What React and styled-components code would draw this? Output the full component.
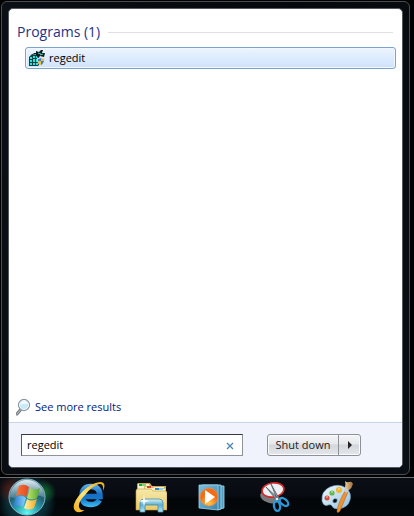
import React, { useState } from "react";
import styled, { createGlobalStyle } from "styled-components";

const GlobalStyle = createGlobalStyle`
  *, *::before, *::after { box-sizing: border-box; }
  body {
    margin: 0;
    background: #000;
    font-family: "Open Sans", "Noto Sans", sans-serif;
    font-size: 11px;
    line-height: 16px;
    color: #000;
  }
  button, input { font: inherit; color: inherit; }
  svg { display: block; flex: none; }
`;

const Desktop = styled.div`
  display: flex;
  flex-direction: column;
  min-height: 100vh;
`;

const MenuFrame = styled.section`
  flex: 1;
  display: flex;
  margin: 1px 4px 2px 1px;
  padding: 6px;
  border: 1px solid #4b4e51;
  border-radius: 6px;
  background: linear-gradient(100deg, #0b1016, #05080c 60%, #0a0f15);
`;

const MenuPanel = styled.div`
  flex: 1;
  display: flex;
  flex-direction: column;
  min-width: 0;
  border: 1px solid #55595d;
  border-radius: 5px;
  background: #fff;
  overflow: hidden;
`;

const Results = styled.div`
  flex: 1;
  padding: 13px 6px 0 8px;
`;

const GroupTitle = styled.h2`
  display: flex;
  align-items: center;
  gap: 8px;
  margin: 0 3px 5px 0;
  font-size: 14px;
  font-weight: 400;
  line-height: 20px;
  color: #1e3287;

  &::after {
    content: "";
    flex: 1;
    height: 1px;
    background: #dfe0e2;
  }
`;

const ResultList = styled.ul`
  margin: 0;
  padding: 0 0 0 8px;
  list-style: none;
`;

const ResultButton = styled.button`
  display: flex;
  align-items: center;
  gap: 4px;
  width: 100%;
  height: 22px;
  padding: 0 3px;
  border: 1px solid #7da2ce;
  border-radius: 3px;
  background: linear-gradient(#ecf4fe, #cfe3fd);
  box-shadow: inset 0 0 0 1px #f1f7ff;
  text-align: left;
`;

const MoreLink = styled.a`
  display: flex;
  align-items: center;
  align-self: flex-start;
  gap: 3px;
  padding: 0 7px 6px;
  color: #001b80;
  text-decoration: none;
`;

const MenuFooter = styled.footer`
  display: flex;
  align-items: center;
  gap: 24px;
  height: 45px;
  padding: 0 41px 0 12px;
  border-top: 1px solid #c5d5e8;
  background: #f0f3fb;
`;

const SearchForm = styled.form`
  flex: 1;
  display: flex;
  align-items: center;
  min-width: 0;
  height: 22px;
  border: 1px solid #8f9296;
  border-top-color: #37393c;
  border-left-color: #55585c;
  background: #fff;
`;

const SearchInput = styled.input`
  flex: 1;
  min-width: 0;
  padding: 0 0 0 5px;
  border: 0;
  outline: 0;
  background: transparent;
`;

const ClearButton = styled.button`
  display: grid;
  place-items: center;
  width: 24px;
  height: 20px;
  padding: 1px 0 0;
  border: 0;
  background: transparent;
`;

const PowerGroup = styled.div`
  display: flex;
  height: 22px;
  border: 1px solid #8e9298;
  border-radius: 3px;
  background: linear-gradient(#f4f5f7, #e6e8eb 45%, #d3d6da 50%, #e4e7eb);
  box-shadow: inset 0 0 0 1px #fafbfc;
`;

const PowerButton = styled.button`
  display: grid;
  place-items: center;
  width: ${(p) => p.$width}px;
  padding: 0;
  border: 0;
  border-left: ${(p) => (p.$divided ? "1px solid #8e9298" : "0")};
  background: transparent;
  color: #1c1c1c;
  white-space: nowrap;
`;

const Taskbar = styled.nav`
  display: flex;
  height: 39px;
  border-top: 1px solid #6b6e70;
  background: linear-gradient(#0a0f15, #080c12 45%, #030608 55%, #04080b);
`;

const StartButton = styled.button`
  display: grid;
  place-items: center;
  width: 58px;
  padding: 0 4px 0 0;
  border: 0;
  background:
    radial-gradient(circle at 44px 14px, #126a2c 0, transparent 12px),
    radial-gradient(circle at 12px 12px, #5a1c14 0, transparent 14px),
    radial-gradient(circle at 27px 24px, #14505c 0, #0a2b33 20px, transparent 29px);
`;

const TaskButton = styled.button`
  display: flex;
  justify-content: center;
  width: 62px;
  padding: 3px 0 0;
  border: 0;
  background: transparent;
`;

const RegeditIcon = () => (
  <svg width="16" height="16" viewBox="0 0 16 16" aria-hidden="true">
    <path d="M0 7 3 4 10 5 11 14 9 16H0Z" fill="#0b4546" />
    <path d="M1 7h2v2H1zM4 6h2v2H4zM7 6h2v2H7zM1 10h2v2H1zM4 9h2v3H4zM7 9h2v3H7zM1 13h2v2H1zM4 13h2v2H4zM7 13h2v2H7z" fill="#35dfdb" />
    <path d="m4 4 1-1h2v1zM7 1l3 1 2-2 2 0-1 3 3 0-1 4-4-1-2 2-2-3z" fill="#111b1c" />
    <path d="m9 3 3 1m-1 1 3-1" stroke="#43c9c5" fill="none" />
    <path d="M8 8q2 0 4-1 2 1 4 1 0 6-4 8-4-2-4-8" fill="#d9ddea" />
    <path d="M9 9q2 0 3-1v3H9zM12 11h3q-1 3-3 4z" fill="#3c7fd0" />
    <path d="M12 8q1 1 3 1v2h-3zM9 11h3v4q-3-1-3-4z" fill="#f1bd35" />
  </svg>
);

const MagnifierIcon = () => (
  <svg width="16" height="18" viewBox="0 0 16 18" aria-hidden="true">
    <path d="m6 10-5 6" stroke="#777c82" strokeWidth="3" strokeLinecap="round" />
    <path d="m6 10-5 6" stroke="#c1c5c9" strokeLinecap="round" />
    <circle cx="8" cy="7" r="5.5" fill="#c9e8fa" stroke="#8d969e" strokeWidth="1.3" />
    <circle cx="8" cy="7" r="4.5" fill="none" stroke="#eef8ff" />
    <path d="M4.5 7Q5 3 9 3q2 1 2.5 3Q7 5 4.5 7" fill="#f7fcff" />
  </svg>
);

const StartOrb = () => (
  <svg width="40" height="38" viewBox="0 0 40 38" aria-hidden="true">
    <defs>
      <radialGradient id="orb" cx=".5" cy=".95" r=".9">
        <stop offset="0" stopColor="#62fbf5" />
        <stop offset=".35" stopColor="#2ba3b0" />
        <stop offset=".65" stopColor="#245f74" />
        <stop offset="1" stopColor="#6f8f9f" />
      </radialGradient>
      <linearGradient id="orbGloss" x2="0" y2="1">
        <stop stopColor="#e8f6fb" stopOpacity=".9" />
        <stop offset="1" stopColor="#91b8c4" stopOpacity=".3" />
      </linearGradient>
      <linearGradient id="flagRed"><stop stopColor="#ff7436" /><stop offset="1" stopColor="#df4824" /></linearGradient>
      <linearGradient id="flagGreen"><stop stopColor="#c5e36a" /><stop offset="1" stopColor="#4ca632" /></linearGradient>
      <linearGradient id="flagBlue"><stop stopColor="#2476ce" /><stop offset="1" stopColor="#8bd4fb" /></linearGradient>
      <linearGradient id="flagYellow"><stop stopColor="#fff5a8" /><stop offset="1" stopColor="#f7a51f" /></linearGradient>
    </defs>
    <circle cx="20" cy="19" r="18" fill="url(#orb)" stroke="#83b8c7" />
    <path d="M3 19a17 17 0 0 1 34 0q-8-3-17 0-9 3-17 0" fill="url(#orbGloss)" />
    <path d="M12 8q5-3 10 1l-3 10q-4-4-10-1z" fill="url(#flagRed)" />
    <path d="M23 10q5 3 10 0l-3 10q-5 3-10 0z" fill="url(#flagGreen)" />
    <path d="M9 19q5-3 10 1l-3 9q-5-3-10 0z" fill="url(#flagBlue)" />
    <path d="M20 21q4 3 10 0l-3 9q-5 3-10 0z" fill="url(#flagYellow)" />
  </svg>
);

const ExplorerIcon = () => (
  <svg width="32" height="32" viewBox="0 0 32 32" aria-hidden="true">
    <defs>
      <linearGradient id="ieBlue" gradientUnits="userSpaceOnUse" x1="18" y1="2" x2="18" y2="27">
        <stop stopColor="#65b8ee" /><stop offset=".45" stopColor="#176fc3" /><stop offset=".65" stopColor="#1479ce" /><stop offset="1" stopColor="#45c5f8" />
      </linearGradient>
      <linearGradient id="ieGold" y1="1" x2="1" y2="0">
        <stop stopColor="#f3ac18" /><stop offset=".45" stopColor="#ffe576" /><stop offset="1" stopColor="#e9a91c" />
      </linearGradient>
    </defs>
    <path d="M11 15.5H27Q27 5.5 18 5.5T9 15Q9 23.5 18 23.5 24 23.5 26.5 19" fill="none" stroke="url(#ieBlue)" strokeWidth="5.5" />
    <path d="M30 10Q34 1 27 1 18 2 9 11-1 22 1 28q3 6 11 1-5 1-6-3-1-5 6-12Q19 5 26 3q5-1 4 7" fill="url(#ieGold)" />
  </svg>
);

const FoldersIcon = () => (
  <svg width="32" height="32" viewBox="0 0 32 32" aria-hidden="true">
    <defs>
      <linearGradient id="folder" x2="0" y2="1">
        <stop stopColor="#f7e9ab" /><stop offset="1" stopColor="#e9cb69" />
      </linearGradient>
      <linearGradient id="stand" x2="0" y2="1">
        <stop stopColor="#d8f5ff" stopOpacity=".95" /><stop offset=".45" stopColor="#5caed0" /><stop offset="1" stopColor="#b6eafa" />
      </linearGradient>
    </defs>
    <path d="M2 6V3l1-1h12l2 3h14v21H1z" fill="#cba74d" />
    <path d="M3 3h11l1 3h14v19H3z" fill="#fbf1ca" />
    <path d="M9 7V5h10l2 2h10v20H9z" fill="#ddc071" />
    <path d="M10 6h10l1 2h9v18H10z" fill="#fff1bd" />
    <path d="M1 10q0-2 2-2h13l2 2h12q2 0 2 2v17H1z" fill="url(#folder)" stroke="#bf993f" strokeWidth=".6" />
    <path d="M4 3h3v2H4z" fill="#11ae3a" /><path d="M7 3h4v2H7z" fill="#83cf84" />
    <path d="M12 5h4v2h-4z" fill="#d24427" /><path d="M16 5h3v2h-3z" fill="#efad8c" />
    <path d="M20 7h4v2h-4z" fill="#268ad2" /><path d="M24 7h4v2h-4z" fill="#8fd1ed" />
    <path d="M5 31V22q0-4 4-4h15q4 0 4 4v9h-5v-7H10v7z" fill="url(#stand)" stroke="#488cab" strokeWidth=".8" />
    <path d="m9 14 1 5 5 1-5 1-1 5-1-5-5-1 5-1z" fill="#fff" opacity=".9" />
  </svg>
);

const PlayerIcon = () => (
  <svg width="32" height="32" viewBox="0 0 32 32" aria-hidden="true">
    <defs>
      <linearGradient id="sleeve" x2="1" y2="1"><stop stopColor="#79c0df" /><stop offset="1" stopColor="#3c86b0" /></linearGradient>
      <radialGradient id="orange" cy=".85"><stop stopColor="#ffc74a" /><stop offset="1" stopColor="#f36c16" /></radialGradient>
    </defs>
    <path d="M7 5h20v22l-4 1z" fill="#4f9fc4" stroke="#a7dff3" strokeWidth=".8" />
    <path d="M5 4h19v24l-3 1z" fill="#3c86ae" stroke="#a0d9ee" strokeWidth=".9" />
    <path d="M2 4h19v25L2 27z" fill="url(#sleeve)" stroke="#a0d7ed" strokeWidth=".8" />
    <circle cx="12" cy="16" r="9" fill="url(#orange)" stroke="#f5924b" strokeWidth=".6" />
    <path d="M8 9v14l10-7z" fill="#fff" />
  </svg>
);

const SnipIcon = () => (
  <svg width="32" height="32" viewBox="0 0 32 32" aria-hidden="true">
    <ellipse cx="11" cy="16" rx="10" ry="6" fill="#777b80" transform="rotate(16 11 16)" />
    <ellipse cx="14" cy="9" rx="11" ry="7" fill="#eef1f3" stroke="#d52b2c" strokeWidth="1.6" transform="rotate(-8 14 9)" />
    <path d="m7 6 12 15 1-3zM12 3l7 18 2-2z" fill="#909ba3" stroke="#4a545b" strokeWidth=".7" />
    <ellipse cx="18" cy="25" rx="3" ry="5" fill="none" stroke="#2b99d7" strokeWidth="2.3" transform="rotate(-8 18 25)" />
    <ellipse cx="25" cy="21" rx="3" ry="5" fill="none" stroke="#2b99d7" strokeWidth="2.3" transform="rotate(-48 25 21)" />
    <circle cx="18" cy="18" r="1.3" fill="#e7eef2" />
  </svg>
);

const PaintIcon = () => (
  <svg width="32" height="32" viewBox="0 0 32 32" aria-hidden="true">
    <defs>
      <linearGradient id="palette" x2="1" y2="1"><stop stopColor="#f5fbff" /><stop offset="1" stopColor="#8ebfdd" /></linearGradient>
      <linearGradient id="bristle" x2="1"><stop stopColor="#f4d097" /><stop offset="1" stopColor="#9a6a3c" /></linearGradient>
    </defs>
    <path fillRule="evenodd" d="M1 20Q0 10 9 6q9-4 16 1 6 5 4 12-2 8-12 9-5 0-6-3-1-2-4-1Q3 26 1 20m11-1q-1 3 2 3 3-1 2-4-3-1-4 1" fill="url(#palette)" stroke="#6ca5c9" strokeWidth=".6" />
    <circle cx="6" cy="17" r="2.5" fill="#d94a3b" /><circle cx="11" cy="12" r="2.6" fill="#62b746" /><circle cx="18" cy="9" r="3" fill="#f3b52d" />
    <path d="M5 16h2M10 11h2M17 8h2" stroke="#fff" opacity=".7" />
    <path d="m24 10 3 1-8 19q-3 3-3 0 1-8 8-20" fill="#ef9131" stroke="#a95d1e" strokeWidth=".5" />
    <path d="m24 6 4 2-2 4-3-2z" fill="#c6cdd1" />
    <path d="M24 7q1-4 0-7 2 2 4 1 3-1 4 2-1 4-4 6z" fill="url(#bristle)" />
  </svg>
);

const tasks = [
  { name: "Internet Explorer", Icon: ExplorerIcon },
  { name: "Windows Explorer", Icon: FoldersIcon },
  { name: "Windows Media Player", Icon: PlayerIcon },
  { name: "Snipping Tool", Icon: SnipIcon },
  { name: "Paint", Icon: PaintIcon },
];

export default function App() {
  const [query, setQuery] = useState("regedit");
  return (
    <Desktop>
      <GlobalStyle />
      <MenuFrame aria-label="Start menu">
        <MenuPanel>
          <Results>
            <GroupTitle>Programs (1)</GroupTitle>
            <ResultList>
              <li>
                <ResultButton type="button"><RegeditIcon />regedit</ResultButton>
              </li>
            </ResultList>
          </Results>
          <MoreLink href="#results"><MagnifierIcon />See more results</MoreLink>
          <MenuFooter>
            <SearchForm role="search" onSubmit={(e) => e.preventDefault()}>
              <SearchInput aria-label="Search programs and files" value={query} onChange={(e) => setQuery(e.target.value)} />
              <ClearButton type="button" aria-label="Clear search" onClick={() => setQuery("")}>
                <svg width="8" height="8" viewBox="0 0 8 8" aria-hidden="true">
                  <path d="m1 1 6 6M7 1 1 7" stroke="#4a86b4" strokeWidth="1.3" />
                </svg>
              </ClearButton>
            </SearchForm>
            <PowerGroup>
              <PowerButton type="button" $width={70}>Shut down</PowerButton>
              <PowerButton type="button" $width={22} $divided aria-label="Shut down options">
                <svg width="4" height="8" viewBox="0 0 4 8" aria-hidden="true"><path d="m0 0 4 4-4 4z" fill="#222" /></svg>
              </PowerButton>
            </PowerGroup>
          </MenuFooter>
        </MenuPanel>
      </MenuFrame>
      <Taskbar aria-label="Taskbar">
        <StartButton type="button" aria-label="Start"><StartOrb /></StartButton>
        {tasks.map(({ name, Icon }) => (
          <TaskButton key={name} type="button" aria-label={name}><Icon /></TaskButton>
        ))}
      </Taskbar>
    </Desktop>
  );
}
